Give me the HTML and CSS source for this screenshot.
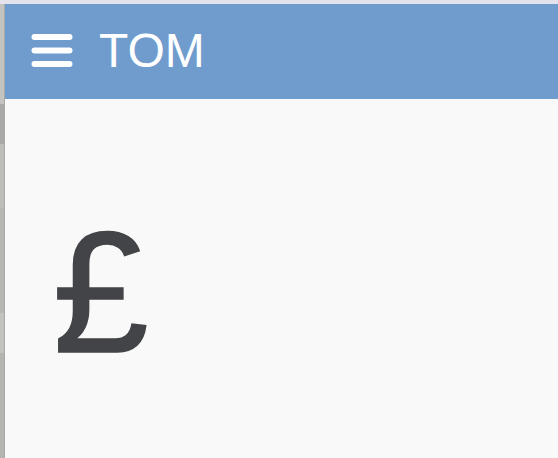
FILE: index.html
```html
<!DOCTYPE html>
<html>
<head>
<meta charset="utf-8">
<link rel="stylesheet" href="styles.css">
</head>
<body>
<div class="topstrip"></div>
<div class="main">
  <div class="edge">
    <div class="seg s1"></div>
    <div class="seg s2"></div>
    <div class="seg s3"></div>
    <div class="seg s4"></div>
    <div class="seg s5"></div>
    <div class="seg s6"></div>
  </div>
  <div class="app">
    <header class="bar">
      <svg class="menu" width="42" height="34" viewBox="0 0 42 34">
        <rect x="0.5" y="0" width="41" height="6" rx="3" fill="#fff"/>
        <rect x="0.5" y="13.5" width="41" height="6" rx="3" fill="#fff"/>
        <rect x="0.5" y="27" width="41" height="6" rx="3" fill="#fff"/>
      </svg>
      <span class="title">TOM</span>
    </header>
    <section class="content">
      <div class="symbol">£</div>
    </section>
  </div>
</div>
</body>
</html>
```
FILE: styles.css
```css
html, body {
  margin: 0;
  padding: 0;
  width: 558px;
  height: 458px;
  overflow: hidden;
  background: #f9f9f9;
  font-family: "Liberation Sans", Arial, sans-serif;
}
.topstrip {
  height: 4px;
  background: #e4e2ea;
}
.main {
  display: flex;
  height: 454px;
}
.edge {
  width: 4px;
  display: flex;
  flex-direction: column;
  border-right: 1px solid #a9a9a6;
  background: #bdbcb8;
}
.seg { flex: none; }
.s1 { height: 100px; background: #c3c3c0; }
.s2 { height: 40px; background: #a9a9a7; }
.s3 { height: 64px; background: #bebdba; }
.s4 { height: 105px; background: #b8b6b2; }
.s5 { height: 40px; background: #c2c2bf; }
.s6 { height: 105px; background: #b6b4b0; }
.app {
  flex: 1;
  display: flex;
  flex-direction: column;
}
.bar {
  height: 95px;
  flex: none;
  background: #6f9bcd;
  display: flex;
  align-items: center;
  padding-left: 26px;
  gap: 26px;
  color: #fff;
}
.menu {
  display: block;
  margin-bottom: 1px;
}
.title {
  font-size: 48px;
  line-height: 1;
  margin-bottom: 2px;
}
.content {
  flex: 1;
  padding: 107px 0 0 48px;
}
.symbol {
  font-size: 172px;
  line-height: 1;
  color: #434448;
  -webkit-text-stroke: 1.5px #434448;
}
```
